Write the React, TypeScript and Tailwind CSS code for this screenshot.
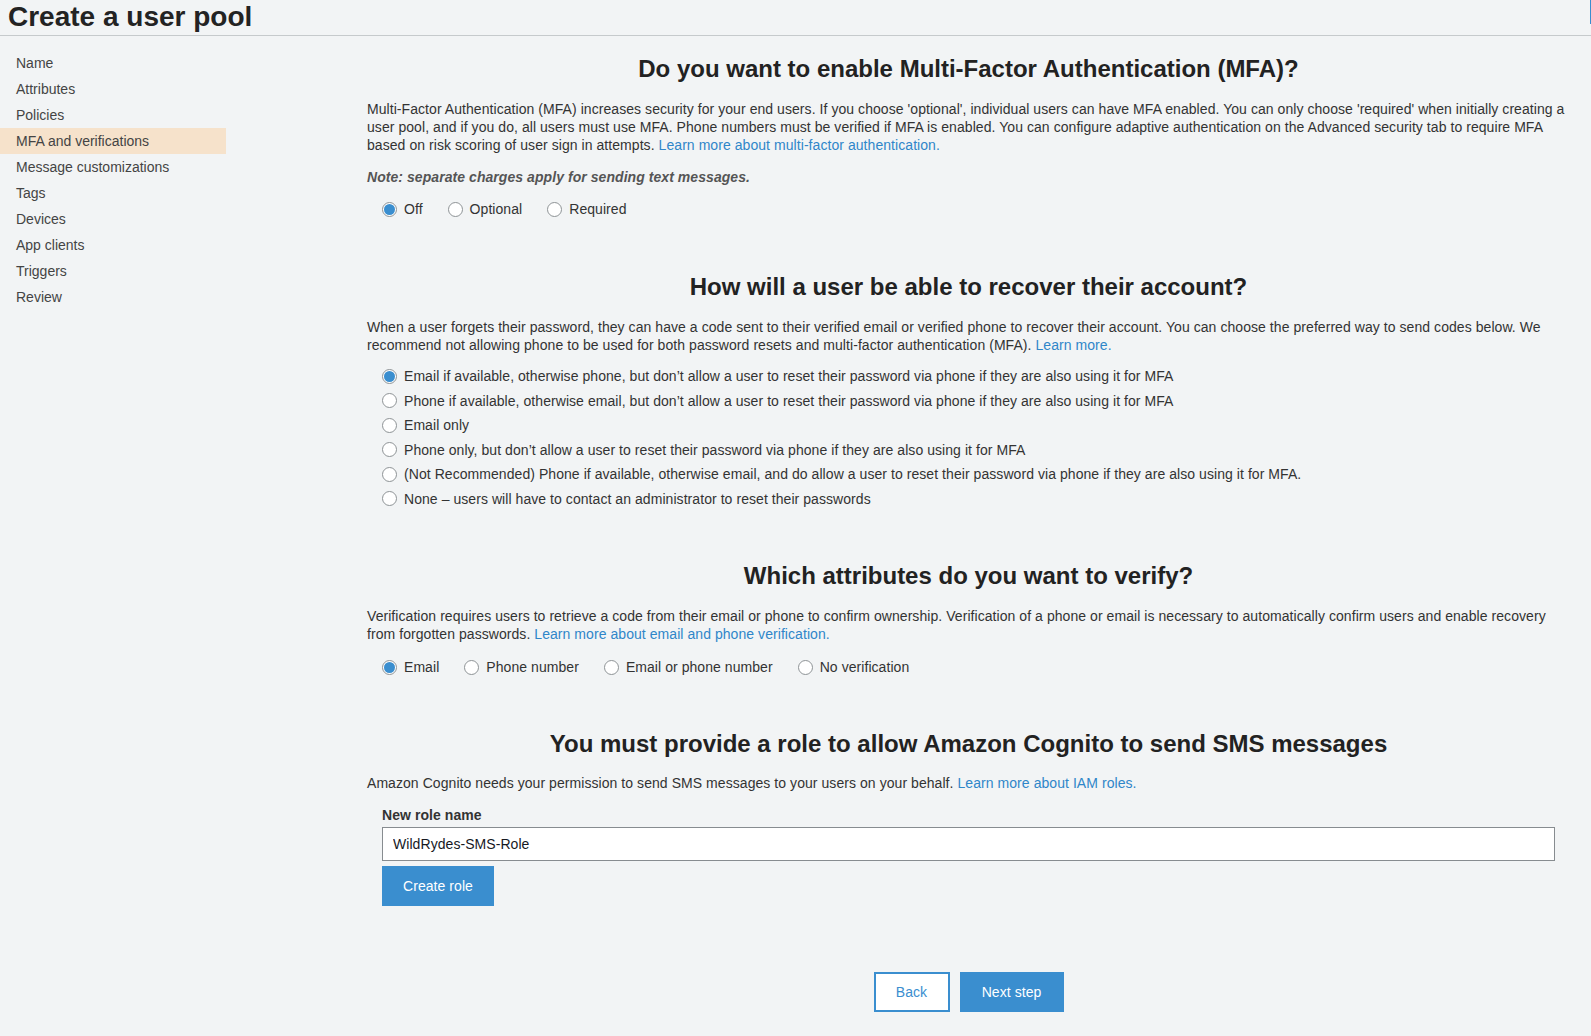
import type { ReactNode } from 'react';

const navItems = [
  'Name',
  'Attributes',
  'Policies',
  'MFA and verifications',
  'Message customizations',
  'Tags',
  'Devices',
  'App clients',
  'Triggers',
  'Review',
];

const recoveryOptions = [
  'Email if available, otherwise phone, but don\u2019t allow a user to reset their password via phone if they are also using it for MFA',
  'Phone if available, otherwise email, but don\u2019t allow a user to reset their password via phone if they are also using it for MFA',
  'Email only',
  'Phone only, but don\u2019t allow a user to reset their password via phone if they are also using it for MFA',
  '(Not Recommended) Phone if available, otherwise email, and do allow a user to reset their password via phone if they are also using it for MFA.',
  'None \u2013 users will have to contact an administrator to reset their passwords',
];

const Radio = ({ checked }: { checked?: boolean }) => (
  <span className="w-[15px] h-[15px] shrink-0 rounded-full border border-[#8e9396] bg-white flex items-center justify-center">
    {checked && <span className="w-[11px] h-[11px] rounded-full bg-[#3a8ecf]" />}
  </span>
);

const RadioRow = ({ options, selected }: { options: string[]; selected: number }) => (
  <div className="flex items-center gap-[25px] pl-[15px] h-5">
    {options.map((o, i) => (
      <label key={o} className="flex items-center gap-[7px]">
        <Radio checked={i === selected} />
        <span>{o}</span>
      </label>
    ))}
  </div>
);

const Heading = ({ children, className = '' }: { children: ReactNode; className?: string }) => (
  <h2 className={`text-center text-[24px] leading-[30px] font-bold tracking-normal text-[#222] ${className}`}>{children}</h2>
);

const Link = ({ children }: { children: ReactNode }) => (
  <a className="text-[#2f86c9]">{children}</a>
);

export default function App() {
  return (
    <div className="min-h-screen bg-[#f2f4f5] text-[#333] text-[14px] leading-[18px] font-['Liberation_Sans',Arial,sans-serif]">
      <header className="h-[36px] border-b border-[#c6cacc] flex justify-between items-start">
        <h1 className="pl-2 text-[28px] leading-[34px] font-bold text-[#232323]">Create a user pool</h1>
        <div className="w-px h-6 bg-[#3a8ecf]" />
      </header>

      <div className="flex">
        <nav className="w-[226px] shrink-0 pt-[14px]">
          {navItems.map((item) => (
            <div
              key={item}
              className={`h-[26px] pl-4 flex items-center text-[#444] ${
                item === 'MFA and verifications' ? 'bg-[#f6e2cb] text-[#222]' : ''
              }`}
            >
              {item}
            </div>
          ))}
        </nav>

        <main className="ml-[141px] w-[1203px] pt-[18px] pb-6 tracking-[0.06px]">
          <Heading>Do you want to enable Multi-Factor Authentication (MFA)?</Heading>
          <p className="mt-4">
            Multi-Factor Authentication (MFA) increases security for your end users. If you choose 'optional', individual users can have MFA enabled. You can only choose 'required' when initially creating a user pool, and if you do, all users must use MFA. Phone numbers must be verified if MFA is enabled. You can configure adaptive authentication on the Advanced security tab to require MFA based on risk scoring of user sign in attempts.{' '}
            <Link>Learn more about multi-factor authentication.</Link>
          </p>
          <p className="mt-[14px] italic font-bold text-[#555]">Note: separate charges apply for sending text messages.</p>
          <div className="mt-[13px]">
            <RadioRow options={['Off', 'Optional', 'Required']} selected={0} />
          </div>

          <Heading className="mt-[53px]">How will a user be able to recover their account?</Heading>
          <p className="mt-4">
            When a user forgets their password, they can have a code sent to their verified email or verified phone to recover their account. You can choose the preferred way to send codes below. We recommend not allowing phone to be used for both password resets and multi-factor authentication (MFA).{' '}
            <Link>Learn more.</Link>
          </p>
          <div className="mt-[10px] pl-[15px] flex flex-col">
            {recoveryOptions.map((o, i) => (
              <label key={o} className="h-[24.5px] flex items-center gap-[7px]">
                <Radio checked={i === 0} />
                <span>{o}</span>
              </label>
            ))}
          </div>

          <Heading className="mt-[50px]">Which attributes do you want to verify?</Heading>
          <p className="mt-4">
            Verification requires users to retrieve a code from their email or phone to confirm ownership. Verification of a phone or email is necessary to automatically confirm users and enable recovery from forgotten passwords.{' '}
            <Link>Learn more about email and phone verification.</Link>
          </p>
          <div className="mt-[14px]">
            <RadioRow options={['Email', 'Phone number', 'Email or phone number', 'No verification']} selected={0} />
          </div>

          <Heading className="mt-[52px]">You must provide a role to allow Amazon Cognito to send SMS messages</Heading>
          <p className="mt-[15px]">
            Amazon Cognito needs your permission to send SMS messages to your users on your behalf.{' '}
            <Link>Learn more about IAM roles.</Link>
          </p>
          <div className="mt-[14px] px-[15px]">
            <div className="font-bold text-[#333]">New role name</div>
            <input
              className="mt-[3px] w-full h-[34px] border border-[#878c90] bg-white px-[10px] text-[#16191f] outline-none"
              defaultValue="WildRydes-SMS-Role"
            />
            <button className="mt-[5px] w-[112px] h-10 bg-[#3a8ecf] text-white">Create role</button>
          </div>

          <div className="mt-[66px] flex justify-center gap-[10px]">
            <button className="w-[76px] h-10 bg-white border-2 border-[#3a8ecf] text-[#3a8ecf]">Back</button>
            <button className="w-[104px] h-10 bg-[#3a8ecf] text-white">Next step</button>
          </div>
        </main>
      </div>
    </div>
  );
}
